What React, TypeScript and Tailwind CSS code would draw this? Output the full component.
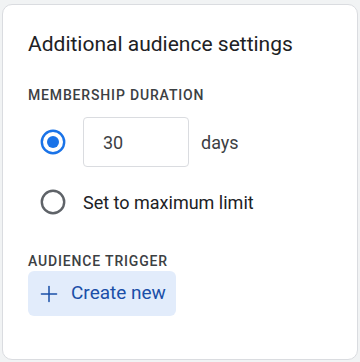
import { Plus } from 'lucide-react';

function Radio({ checked }: { checked: boolean }) {
  return (
    <svg width="26" height="26" viewBox="0 0 26 26" className="shrink-0">
      <circle cx="13" cy="13" r="11.2" fill="none" stroke={checked ? '#1a73e8' : '#5f6368'} strokeWidth="2.4" />
      {checked && <circle cx="13" cy="13" r="6" fill="#1a73e8" />}
    </svg>
  );
}

export default function App() {
  return (
    <div
      className="h-[362px] w-[360px] bg-[#f1f3f4] pl-[2px] pr-[2px] pt-[4px] pb-[2px]"
      style={{ fontFamily: 'Roboto, "Liberation Sans", sans-serif' }}
    >
      <div className="flex h-full flex-col rounded-[10px] border border-[#dadce0] bg-white pl-[25px] pt-[25px]">
        <h2 className="text-[21px] leading-[28px] text-[#202124]">Additional audience settings</h2>

        <div className="mt-[29px] text-[14px] font-medium uppercase leading-[16px] tracking-[0.06em] text-[#3c4043]">
          Membership duration
        </div>

        <div className="mt-[14px] flex items-center">
          <div className="flex w-[55px] items-center pl-[12px]">
            <Radio checked />
          </div>
          <div className="flex h-[50px] w-[106px] items-center rounded-[4px] border border-[#dadce0] pl-[19px] text-[18px] text-[#3c4043]">
            30
          </div>
          <span className="ml-[12px] text-[18px] text-[#3c4043]">days</span>
        </div>

        <div className="mt-[10px] flex h-[50px] items-center">
          <div className="flex w-[55px] items-center pl-[12px]">
            <Radio checked={false} />
          </div>
          <span className="text-[18px] text-[#202124]">Set to maximum limit</span>
        </div>

        <div className="mt-[26px] text-[14px] font-medium uppercase leading-[16px] tracking-[0.06em] text-[#3c4043]">
          Audience trigger
        </div>

        <div className="mt-[2px]">
          <button className="flex h-[45px] w-[148px] items-center rounded-[6px] bg-[#e2ecfb] pl-[8px] text-[19px] text-[#1a4fa8]">
            <Plus size={26} strokeWidth={1.4} className="mr-[9px]" />
            Create new
          </button>
        </div>
      </div>
    </div>
  );
}
